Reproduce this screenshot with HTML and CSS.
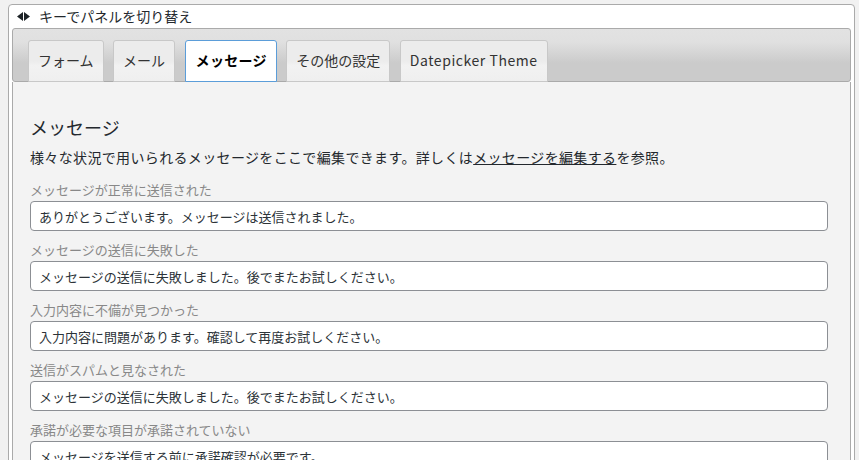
FILE: index.html
```html
<!DOCTYPE html>
<html lang="ja">
<head>
<meta charset="utf-8">
<title>メッセージ</title>
<link rel="stylesheet" href="styles.css">
</head>
<body>
<div class="box">
  <div class="hint">
    <svg class="hint-icon" width="13" height="9" viewBox="0 0 13 9"><polygon points="0,4.5 6,0 6,9" fill="#1d2327"/><polygon points="13,4.5 7,0 7,9" fill="#1d2327"/></svg>
    <span>キーでパネルを切り替え</span>
  </div>
  <div class="tabs">
    <div class="tab">フォーム</div>
    <div class="tab">メール</div>
    <div class="tab active">メッセージ</div>
    <div class="tab">その他の設定</div>
    <div class="tab latin">Datepicker Theme</div>
  </div>
  <div class="panel">
    <h2 class="title">メッセージ</h2>
    <p class="desc">様々な状況で用いられるメッセージをここで編集できます。詳しくは<a class="link" href="#">メッセージを編集する</a>を参照。</p>
    <div class="field">
      <label class="label">メッセージが正常に送信された</label>
      <input class="input" type="text" value="ありがとうございます。メッセージは送信されました。">
    </div>
    <div class="field">
      <label class="label">メッセージの送信に失敗した</label>
      <input class="input" type="text" value="メッセージの送信に失敗しました。後でまたお試しください。">
    </div>
    <div class="field">
      <label class="label">入力内容に不備が見つかった</label>
      <input class="input" type="text" value="入力内容に問題があります。確認して再度お試しください。">
    </div>
    <div class="field">
      <label class="label">送信がスパムと見なされた</label>
      <input class="input" type="text" value="メッセージの送信に失敗しました。後でまたお試しください。">
    </div>
    <div class="field">
      <label class="label">承諾が必要な項目が承諾されていない</label>
      <input class="input" type="text" value="メッセージを送信する前に承諾確認が必要です。">
    </div>
  </div>
</div>
</body>
</html>
```

FILE: styles.css
```css
html, body {
  margin: 0;
  height: 100%;
  overflow: hidden;
}
body {
  background: #f1f1f1;
  padding: 4px 4px 0 8px;
  font-family: "Noto Sans CJK JP", "Noto Sans", sans-serif;
  color: #23282d;
  font-size: 14px;
}
.box {
  background: #fff;
  border: 1px solid #aaa;
  border-radius: 4px;
  padding: 0 3px;
  height: 600px;
}
.hint {
  display: flex;
  align-items: center;
  height: 23px;
  padding-left: 5px;
  font-size: 14px;
  line-height: 23px;
  color: #23282d;
}
.hint-icon {
  margin-right: 9px;
}
.tabs {
  display: flex;
  align-items: flex-end;
  gap: 9.5px;
  height: 42px;
  padding: 10px 15px 0;
  border: 1px solid #aaa;
  border-radius: 3px;
  background: linear-gradient(to bottom, #e2e2e2 0%, #e0e0e0 25%, #cbcbcb 65%, #cbcbcb 100%);
}
.tab {
  height: 40px;
  line-height: 39px;
  padding: 0 9px;
  margin-bottom: -1px;
  border: 1px solid #c8c8c8;
  border-radius: 3px 3px 0 0;
  background: linear-gradient(to bottom, #ececec 0%, #ececec 50%, #f2f2f2 62%, #efefef 100%);
  color: #333;
  font-size: 14px;
  white-space: nowrap;
}
.tab.latin {
  letter-spacing: 0.55px;
}
.tab.active {
  background: #fff;
  border: 1px solid #5b9dd9;
  padding: 0 9px 0 10px;
  color: #000;
  font-weight: bold;
  letter-spacing: 0.3px;
}
.panel {
  background: #f3f3f3;
  border-left: 1px solid #aaa;
  border-right: 1px solid #aaa;
  padding: 33px 22px 0 17px;
  height: 500px;
}
.title {
  margin: 0 0 8px;
  font-size: 18px;
  font-weight: normal;
  line-height: 24px;
  color: #23282d;
}
.desc {
  margin: 0 0 13px;
  font-size: 14px;
  line-height: 20px;
  letter-spacing: 0.35px;
  color: #23282d;
}
.link {
  color: #23282d;
  text-decoration: underline;
}
.field {
  display: flex;
  flex-direction: column;
  margin-bottom: 9px;
}
.label {
  font-size: 13px;
  line-height: 20px;
  color: #888;
  margin-bottom: 1px;
}
.input {
  box-sizing: border-box;
  height: 30px;
  width: 100%;
  margin: 0;
  padding: 0 8px;
  border: 1px solid #8c8f94;
  border-radius: 4px;
  background: #fff;
  font-family: "Noto Sans CJK JP", "Noto Sans", sans-serif;
  font-size: 13px;
  color: #2c3338;
  outline: none;
}
```
